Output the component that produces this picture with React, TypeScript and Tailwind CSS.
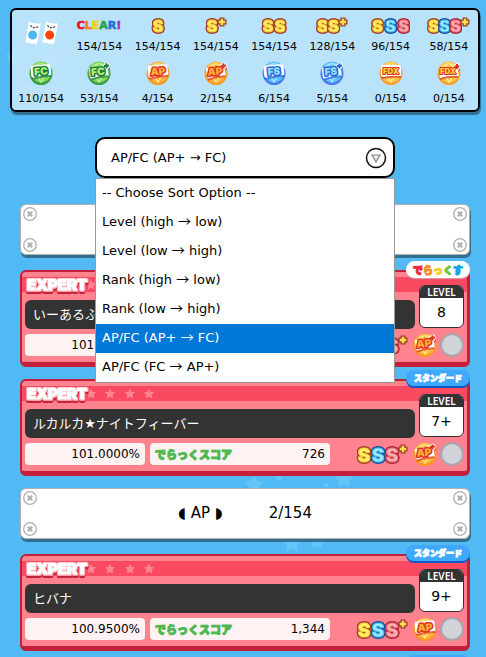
import React from "react";

const sans = "font-['DejaVu_Sans','Noto_Sans_CJK_JP',sans-serif]";
const heavy = "'Inter', 'Liberation Sans', sans-serif";

const starPath = (cx: number, cy: number, r: number, inner = 0.5) =>
  Array.from({ length: 10 }, (_, i) => {
    const d = i % 2 ? r * inner : r;
    const a = (Math.PI / 5) * i - Math.PI / 2;
    return `${(cx + d * Math.cos(a)).toFixed(1)},${(cy + d * Math.sin(a)).toFixed(1)}`;
  }).join(" ");

const outline = (c: string) =>
  `drop-shadow(1px 0 0 ${c}) drop-shadow(-1px 0 0 ${c}) drop-shadow(0 1px 0 ${c}) drop-shadow(0 -1px 0 ${c})`;

const backdropStars = [
  [48, 22, 14], [12, 57, 5], [50, 58, 10], [30, 94, 12], [90, 18, 8],
  [254, 485, 8], [344, 479, 8], [292, 543, 8], [317, 541, 7],
];

function Backdrop() {
  return (
    <svg className="pointer-events-none absolute inset-0 h-full w-full" aria-hidden="true">
      {backdropStars.map(([x, y, r], i) => (
        <polygon key={i} points={starPath(x, y, r, 0.55)} fill="#63c6f7" stroke="#63c6f7" strokeWidth="2" strokeLinejoin="round" />
      ))}
      <circle cx="279" cy="477" r="3" fill="#63c6f7" />
      <circle cx="326" cy="485" r="2" fill="#63c6f7" />
    </svg>
  );
}

const tones = {
  gold: { edge: "#a0402a", rim: "#ffcf45", fill: "#fff062" },
  blue: { edge: "#1d4fa3", rim: "#48c2f5", fill: "#9debff" },
  red: { edge: "#a5283c", rim: "#f8727e", fill: "#ffb0b4" },
};

function Rank({ letters, plus = false, large = false }: { letters: (keyof typeof tones)[]; plus?: boolean; large?: boolean }) {
  const pitch = large ? 14 : letters.length === 3 ? (plus ? 11 : 13) : letters.length === 2 && plus ? 11 : 12;
  const size = large ? 19 : 16;
  const h = large ? 21 : 18;
  const base = large ? 19 : 16;
  const w = letters.length * pitch + 2 + (plus ? 8 : 0);
  const px = letters.length * pitch + 5;
  return (
    <svg width={w} height={h} viewBox={`0 0 ${w} ${h}`} className="overflow-visible" role="img" aria-label="rank">
      {letters.map((t, i) => (
        <g key={i} filter={outline(tones[t].edge)}>
          <text
            x={1 + pitch / 2 + i * pitch}
            y={base - 1}
            textAnchor="middle"
            fontFamily={heavy}
            fontWeight="900"
            fontSize={size}
            strokeLinejoin="round"
            stroke={tones[t].rim}
            strokeWidth="1"
            fill={tones[t].fill}
          >
            S
          </text>
        </g>
      ))}
      {plus && (
        <g transform={`translate(${px} 5)`}>
          <path d="M0-4.500v9M-4.500 0h9" stroke="#a0402a" strokeWidth="5" />
          <path d="M0-3.200v6.400M-3.200 0h6.400" stroke="#ffe04c" strokeWidth="2.400" />
        </g>
      )}
    </svg>
  );
}

const medals = {
  green: { ring: "#3c9a48", ball: "#7ed957", hi: "#b6f08a", text: "#b4f56a", edge: "#1f7a45" },
  orange: { ring: "#f79a24", ball: "#ffb545", hi: "#ffdf7a", text: "#ffb03a", edge: "#e0341c" },
  blue: { ring: "#4a78f4", ball: "#5ec1ff", hi: "#9ae2ff", text: "#8fe2ff", edge: "#2b62d8" },
  gold: { ring: "#f7a032", ball: "#ffc547", hi: "#ffe487", text: "#ffd03a", edge: "#d8321c" },
};

function Medal({ tone, label, plus = false }: { tone: keyof typeof medals; label: string; plus?: boolean }) {
  const m = medals[tone];
  const long = label.length > 2;
  return (
    <svg width="26" height="26" viewBox="0 0 26 26" className="overflow-visible" role="img" aria-label={label}>
      <circle cx="13" cy="13.500" r="11.500" fill={m.ring} />
      <circle cx="13" cy="12" r="10.500" fill={m.ball} />
      <path d="M5 7q8-8 16 0l-4 1-4-4-4 4z" fill={m.hi} />
      <path d="M3 15l7 2 3 5 3-5 7-2" fill="none" stroke={m.hi} strokeWidth="1.500" />
      <g transform={long ? undefined : "rotate(-5 13 12)"}>
        <path d={plus ? "M3 8h14l2-3q4-2 5 1q1 3-2 5v6q-9-1-18 2z" : "M4 6h17q2 0 2 2v9q-9-1-18 1q-2 0-2-2v-8z"} fill={m.edge} opacity="0.700" transform="translate(0 1)" />
        <path d={plus ? "M3 7h14l2-3q4-2 5 1q1 3-2 5v6q-9-1-18 2z" : "M4 5h17q2 0 2 2v9q-9-1-18 1q-2 0-2-2v-8z"} fill="#fff" />
        <text
          x={plus ? 12 : 13}
          y={long ? 14 : 15}
          textAnchor="middle"
          fontFamily={heavy}
          fontWeight="900"
          fontSize={long ? 8 : 10}
          strokeLinejoin="round"
          stroke={m.edge}
          strokeWidth={long ? 2 : 3}
          paintOrder="stroke"
          fill={m.text}
        >
          {label}
        </text>
        {plus && <path d="M21 4v5M18.500 6.500h5" stroke={m.edge} strokeWidth="2" />}
      </g>
    </svg>
  );
}

function Mascots() {
  const one = (x: number, color: string) => (
    <g transform={`translate(${x} 1) rotate(10 7 11)`}>
      <path d="M1 0l3 1h6l3-1v22l-3-1-2 1-3-1-2 1-2-1z" fill="#fff" />
      <path d="M3 4l2 1M6 5q1 2 2 0M9 5l2-1" stroke="#333" strokeWidth="1" fill="none" />
      <circle cx="7" cy="13" r="4.500" fill={color} />
    </g>
  );
  return (
    <svg width="36" height="26" viewBox="0 0 36 26" role="img" aria-label="Versus">
      {one(3, "#4bb6f2")}
      {one(20, "#ff4408")}
    </svg>
  );
}

function Clear() {
  const parts = [["C", "#e50f22"], ["L", "#f08010"], ["E", "#f3d400"], ["A", "#27a34a"], ["R", "#2173d6"], ["!", "#9a30c0"]];
  return (
    <svg width="48" height="14" viewBox="0 0 48 14" className="overflow-visible" role="img" aria-label="CLEAR!">
      <text x="24" y="10" textAnchor="middle" fontFamily="'DejaVu Sans', sans-serif" fontWeight="700" fontSize="11" strokeWidth="0.600">
        {parts.map(([ch, c]) => <tspan key={ch} fill={c} stroke={c}>{ch}</tspan>)}
      </text>
    </svg>
  );
}

function Summary() {
  const top: [React.ReactNode, string][] = [
    [<Clear />, "154/154"],
    [<Rank letters={["gold"]} />, "154/154"],
    [<Rank letters={["gold"]} plus />, "154/154"],
    [<Rank letters={["gold", "gold"]} />, "154/154"],
    [<Rank letters={["gold", "gold"]} plus />, "128/154"],
    [<Rank letters={["gold", "blue", "red"]} />, "96/154"],
    [<Rank letters={["gold", "blue", "red"]} plus />, "58/154"],
  ];
  const bottom: [React.ReactNode, string][] = [
    [<Medal tone="green" label="FC" />, "110/154"],
    [<Medal tone="green" label="FC" plus />, "53/154"],
    [<Medal tone="orange" label="AP" />, "4/154"],
    [<Medal tone="orange" label="AP" plus />, "2/154"],
    [<Medal tone="blue" label="FS" />, "6/154"],
    [<Medal tone="blue" label="FS" plus />, "5/154"],
    [<Medal tone="gold" label="FDX" />, "0/154"],
    [<Medal tone="gold" label="FDX" plus />, "0/154"],
  ];
  return (
    <section className="relative rounded-md border-2 border-black bg-[#cbe9fb]/85 pt-0.5 pb-[3px] text-[11px] shadow-[1px_3px_1px_#33708f]">
      <div className="grid grid-cols-8">
        <div className="flex items-center justify-center"><Mascots /></div>
        {top.map(([icon, n], i) => (
          <div key={i} className="flex flex-col items-center">
            <div className="flex h-[27px] items-center">{icon}</div>
            <span className="leading-4">{n}</span>
          </div>
        ))}
        {bottom.map(([icon, n], i) => (
          <div key={i} className="flex flex-col items-center">
            <div className="flex h-9 items-center">{icon}</div>
            <span className="leading-4">{n}</span>
          </div>
        ))}
      </div>
    </section>
  );
}

const Arrow = () => <span className="font-['Noto_Sans_CJK_JP',sans-serif] leading-none">→</span>;

const options: [string, string, string][] = [
  ["Level (high", "low)", "lv-desc"],
  ["Level (low", "high)", "lv-asc"],
  ["Rank (high", "low)", "rank-desc"],
  ["Rank (low", "high)", "rank-asc"],
  ["AP/FC (AP+", "FC)", "ap-desc"],
  ["AP/FC (FC", "AP+)", "ap-asc"],
];

function SortMenu() {
  return (
    <div className="relative z-20 mx-auto mt-[25px] w-[300px] text-[13px]">
      <select
        aria-label="Sort option"
        defaultValue="ap-desc"
        className="block h-[41px] w-full appearance-none rounded-[10px] border-2 border-black bg-white px-3.5 font-['DejaVu_Sans','Noto_Sans_CJK_JP',sans-serif] text-black outline-none"
      >
        {options.map(([a, b, v]) => <option key={v} value={v}>{a} → {b}</option>)}
      </select>
      <svg className="pointer-events-none absolute top-2.5 right-2" width="22" height="22" viewBox="0 0 22 22" aria-hidden="true">
        <circle cx="11" cy="11" r="9.500" fill="#fff" stroke="#111" strokeWidth="1.500" />
        <path d="M7 8h8l-4 7z" fill="#e8e8e8" stroke="#888" strokeWidth="1.200" />
      </svg>
      <ul role="listbox" aria-label="Sort options" className="absolute inset-x-0 top-full border border-[#999] bg-white">
        <li role="option" aria-selected="false" className="h-[29px] px-1.5 leading-7">-- Choose Sort Option --</li>
        {options.map(([a, b, v]) => (
          <li
            key={v}
            role="option"
            aria-selected={v === "ap-desc"}
            className={v === "ap-desc" ? "h-[29px] bg-[#0078d7] px-1.5 leading-7 text-white" : "h-[29px] px-1.5 leading-7"}
          >
            {a} <Arrow /> {b}
          </li>
        ))}
      </ul>
    </div>
  );
}

function Screw() {
  return (
    <svg width="14" height="14" viewBox="0 0 14 14" aria-hidden="true">
      <circle cx="7" cy="7" r="6.300" fill="#fff" stroke="#b0b0b0" strokeWidth="1.300" />
      <path d="M4.800 4.800l4.400 4.400M9.200 4.800l-4.400 4.400" stroke="#b0b0b0" strokeWidth="2.200" />
    </svg>
  );
}

function Plate({ children }: { children?: React.ReactNode }) {
  return (
    <div className="relative flex h-[51px] justify-between rounded-md border border-[#b0b0b0] bg-white p-0.5 shadow-[1px_3px_0_#33708f]">
      <div className="flex flex-col justify-between"><Screw /><Screw /></div>
      <div className="flex items-center gap-[46px] text-[15px]">{children}</div>
      <div className="flex flex-col justify-between"><Screw /><Screw /></div>
    </div>
  );
}

function KindBadge({ deluxe = false }: { deluxe?: boolean }) {
  const letters = [["で", "#ec2a36"], ["ら", "#f78c1e"], ["っ", "#f5cf10"], ["く", "#6cbf3c"], ["す", "#16a5e0"]];
  return deluxe ? (
    <div className="absolute -top-[11px] -right-[3px] z-10 flex h-[17px] w-16 items-center justify-center rounded-full bg-white font-['Noto_Sans_CJK_JP',sans-serif] text-[10px] leading-none font-black shadow-[0_1px_1px_#d8a0a8]">
      {letters.map(([c, color]) => <span key={c} className="[-webkit-text-stroke:1px]" style={{ color }}>{c}</span>)}
    </div>
  ) : (
    <div className="absolute -top-[11px] -right-[3px] z-10 flex h-4 w-16 items-center justify-center rounded-full bg-[#3fa9ff] font-['Noto_Sans_CJK_JP',sans-serif] text-[8px] leading-none font-black whitespace-nowrap text-white shadow-[0_2px_0_#1258c4] [-webkit-text-stroke:1px]">
      スタンダード
    </div>
  );
}

function ExpertStrip() {
  return (
    <div className="mt-[5px] flex h-[15px] items-center bg-[#f94a62]">
      <svg width="140" height="20" viewBox="0 0 140 20" className="overflow-visible" role="img" aria-label="EXPERT">
        {[69, 88, 108, 127].map((x) => <polygon key={x} points={starPath(x, 10, 5.5)} fill="#ff8491" />)}
        <g filter="drop-shadow(0 1px 0 #ffa5ae) drop-shadow(1px 0 0 #ffa5ae) drop-shadow(-1px 0 0 #ffa5ae) drop-shadow(0 2px 0 #c4203a)">
          <text x="5" y="15" fontFamily={heavy} fontWeight="900" fontSize="15" strokeLinejoin="round" stroke="#fff" strokeWidth="1" fill="#fff">
            EXPERT
          </text>
        </g>
      </svg>
    </div>
  );
}

interface Song {
  title: string;
  level: string;
  rate: string;
  score?: string;
  plus?: boolean;
  deluxe?: boolean;
}

function SongCard({ title, level, rate, score, plus, deluxe }: Song) {
  return (
    <article className="relative rounded-md border-t-2 border-r-[3px] border-b-[5px] border-l-2 border-[#c4203a] bg-[#ff828f]">
      <KindBadge deluxe={deluxe} />
      <ExpertStrip />
      <div className="mt-2 flex items-start gap-1 px-[3px]">
        <h2 className="flex h-[29px] flex-1 items-center rounded-md bg-[#333] px-2 text-[13px] text-white">{title}</h2>
        <div className="-mt-[15px] flex h-[43px] w-[45px] flex-col overflow-hidden rounded-md border border-[#333] bg-white text-center">
          <span className="bg-[#333] font-['Noto_Sans',sans-serif] text-[10px] leading-3 font-semibold text-white">LEVEL</span>
          <span className="text-[14px] leading-7">{level}</span>
        </div>
      </div>
      <div className="mt-[5px] mb-1.5 flex h-[22px] items-center px-[3px] text-[12px]">
        <div className="h-full w-[120px] rounded bg-[#fff2f2] px-[5px] text-right leading-[22px]">{rate}</div>
        <div className="ml-[5px] flex h-full w-[180px] items-center justify-between rounded bg-[#fff2f2] px-[5px]">
          <span className="font-['Noto_Sans_CJK_JP',sans-serif] text-[11px] leading-none font-black text-[#4cb850] [-webkit-text-stroke:1px]">でらっくスコア</span>
          <span>{score}</span>
        </div>
        <div className="ml-auto flex items-center">
          <Rank letters={["gold", "blue", "red"]} plus large />
          <span className="ml-1 flex"><Medal tone="orange" label="AP" plus={plus} /></span>
          <span className="ml-0.5 h-6 w-6 rounded-full border-2 border-[#a9a4ac] bg-[#d2d3d8]" />
        </div>
      </div>
    </article>
  );
}

export default function App() {
  return (
    <main className={`relative h-screen overflow-hidden bg-[#51baf4] pt-2 pr-1.5 pl-2.5 text-black ${sans}`}>
      <Backdrop />
      <Summary />
      <SortMenu />
      <div className="mt-[26px] flex flex-col gap-3 px-2.5">
        <Plate />
        <div className="mt-[3px]">
          <SongCard title="いーあるふ" level="8" rate="101.0000%" plus deluxe />
        </div>
        <SongCard title="ルカルカ★ナイトフィーバー" level="7+" rate="101.0000%" score="726" plus />
        <Plate>
          <span>◖ AP ◗</span>
          <span>2/154</span>
        </Plate>
        <div className="mt-[3px]">
          <SongCard title="ヒバナ" level="9+" rate="100.9500%" score="1,344" />
        </div>
        <div className="-mt-2 h-4 w-16 self-end rounded-full bg-[#3fa9ff]" />
      </div>
    </main>
  );
}
